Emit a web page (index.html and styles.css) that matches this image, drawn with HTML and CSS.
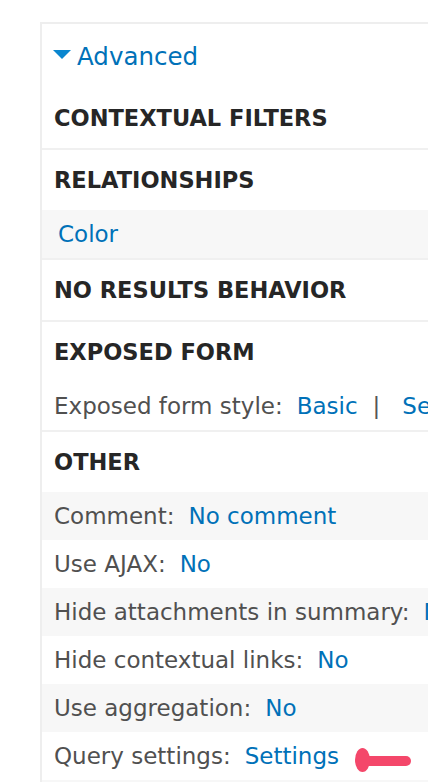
FILE: index.html
```html
<!DOCTYPE html>
<html lang="en">
<head>
<meta charset="utf-8">
<title>Advanced</title>
<link rel="stylesheet" href="styles.css">
</head>
<body>
<div class="page">
  <div class="panel">
    <div class="summary">
      <span class="caret"></span>
      <a class="summary-link" href="#">Advanced</a>
    </div>
    <section class="section first">
      <h3 class="section-title">CONTEXTUAL FILTERS</h3>
    </section>
    <section class="section">
      <h3 class="section-title">RELATIONSHIPS</h3>
      <div class="row odd field"><a class="link" href="#">Color</a></div>
    </section>
    <section class="section">
      <h3 class="section-title">NO RESULTS BEHAVIOR</h3>
    </section>
    <section class="section">
      <h3 class="section-title">EXPOSED FORM</h3>
      <div class="row"><span class="label">Exposed form style:</span><a class="link" href="#">Basic</a><span class="sep">|</span><a class="link" href="#">Settings</a></div>
    </section>
    <section class="section">
      <h3 class="section-title">OTHER</h3>
      <div class="row odd"><span class="label">Comment:</span><a class="link" href="#">No comment</a></div>
      <div class="row"><span class="label">Use AJAX:</span><a class="link" href="#">No</a></div>
      <div class="row odd"><span class="label">Hide attachments in summary:</span><a class="link" href="#">No</a></div>
      <div class="row"><span class="label">Hide contextual links:</span><a class="link" href="#">No</a></div>
      <div class="row odd"><span class="label">Use aggregation:</span><a class="link" href="#">No</a></div>
      <div class="row"><span class="label">Query settings:</span><a class="link" href="#">Settings</a></div>
      <div class="row odd"></div>
    </section>
  </div>
  <svg class="annotation" width="64" height="30" viewBox="0 0 64 30" aria-hidden="true">
    <line x1="12" y1="15" x2="54" y2="15" stroke="#f4476a" stroke-width="10" stroke-linecap="round"/>
    <ellipse cx="10.5" cy="14" rx="7.5" ry="12" fill="#f4476a"/>
  </svg>
</div>
</body>
</html>
```
FILE: styles.css
```css
html, body {
  margin: 0;
  padding: 0;
  background: #ffffff;
  overflow: hidden;
}

body {
  font-family: "DejaVu Sans", "Liberation Sans", sans-serif;
  color: #555555;
}

.page {
  position: relative;
  padding: 22px 0 0 40px;
  height: 760px;
  overflow: hidden;
}

.panel {
  width: 720px;
  border-top: 2px solid #eeeeee;
  border-left: 2px solid #eeeeee;
}

.summary {
  height: 64px;
  display: flex;
  align-items: center;
  padding-left: 11px;
  gap: 6px;
}

.caret {
  width: 0;
  height: 0;
  border-left: 9.5px solid transparent;
  border-right: 9.5px solid transparent;
  border-top: 9px solid #0a86cf;
  margin-top: -3px;
}

.summary-link {
  font-size: 24.5px;
  color: #0071b8;
  text-decoration: none;
}

.section {
  border-top: 2px solid #f0f0f0;
}

.section.first {
  border-top: 0;
}

.section-title {
  margin: 0;
  height: 60px;
  display: flex;
  align-items: center;
  padding-left: 12px;
  font-size: 22.5px;
  font-weight: bold;
  color: #262626;
}

.row {
  height: 48px;
  display: flex;
  align-items: center;
  padding-left: 12px;
  font-size: 23px;
  white-space: nowrap;
}

.row.odd {
  background: #f7f7f7;
}

.row.field {
  padding-left: 16px;
}

.label {
  color: #505050;
  margin-right: 14px;
}

.link {
  color: #0071b8;
  text-decoration: none;
}

.sep {
  color: #555555;
  margin: 0 22px 0 15px;
}

.annotation {
  position: absolute;
  left: 352px;
  top: 746px;
}
```
